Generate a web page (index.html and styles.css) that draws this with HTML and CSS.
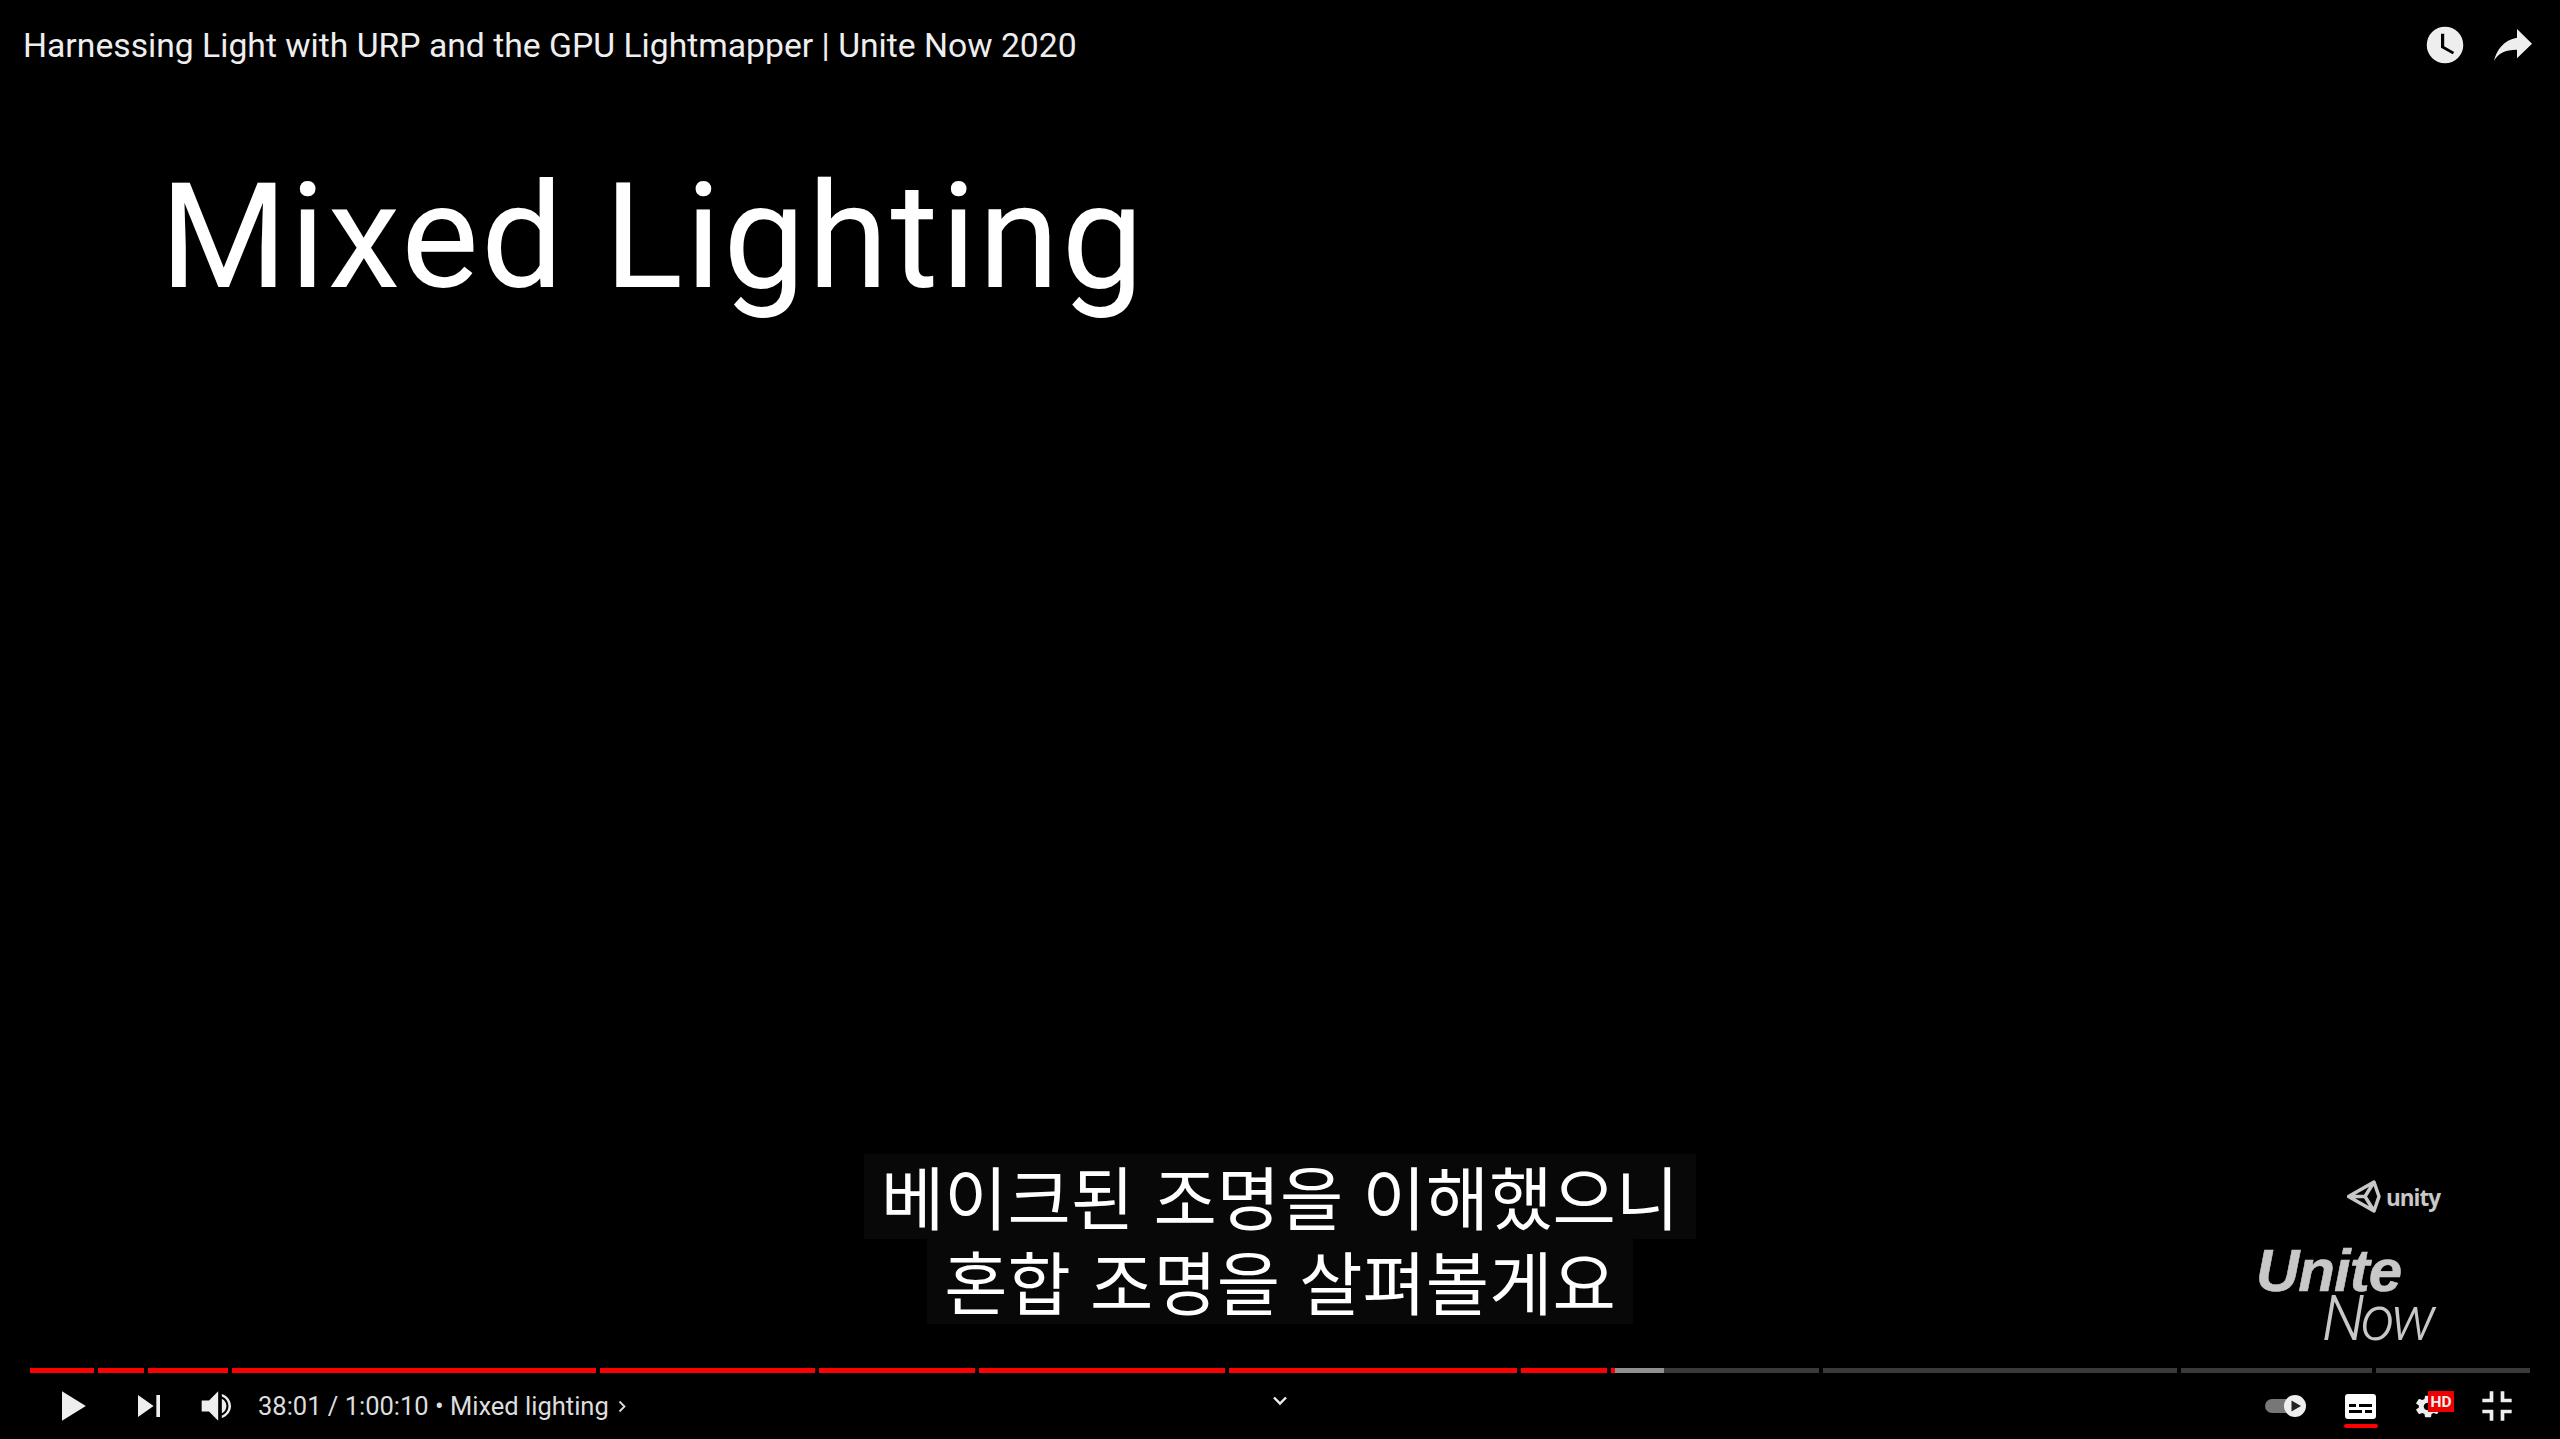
FILE: index.html
```html
<!DOCTYPE html>
<html lang="ko">
<head>
    <meta charset="UTF-8">
    <meta name="viewport" content="width=device-width, initial-scale=1.0">
    <title>Harnessing Light with URP and the GPU Lightmapper | Unite Now 2020</title>
    <link rel="stylesheet" href="styles.css">
</head>
<body>
    <div class="player">
        <div class="top-bar">
            <div class="video-title">Harnessing Light with URP and the GPU Lightmapper | Unite Now 2020</div>
            <div class="top-actions">
                <svg class="top-icon" viewBox="0 0 36 36"><path fill="#eee" fill-rule="evenodd" d="M18 4.300a13.700 13.700 0 1 0 0 27.400a13.700 13.700 0 0 0 0-27.400zM15 9.500h2.400v9.500l7.500 4.200-1.100 1.800-8.800-5z"/></svg>
                <svg class="top-icon" viewBox="0 0 36 36"><path fill="#eee" d="M21 6 32.250 17 21 28V21.500C12 21.500 7 24 3.750 30 5.500 22 11 14 21 12.500z"/></svg>
            </div>
        </div>

        <div class="stage">
            <h1 class="slide-title">Mixed Lighting</h1>

            <div class="captions">
                <div class="caption-line">베이크된 조명을 이해했으니</div>
                <div class="caption-line">혼합 조명을 살펴볼게요</div>
            </div>

            <div class="watermark">
                <div class="unity-mark">
                    <svg class="unity-cube" viewBox="0 0 34 34"><path fill="none" stroke="#c8c8c8" stroke-width="3.500" stroke-linejoin="round" d="M1.500 16.500 27 2 32 16.500 27 31zM1.500 16.500H18M27 2 18 16.500 27 31"/></svg>
                    <span class="unity-word">unity</span>
                </div>
                <div class="unite-word">Unite</div>
                <div class="now-word">Now</div>
            </div>
        </div>

        <div class="progress">
            <div class="chapter" style="flex-grow: 64"><i class="played" style="width: 100%"></i></div>
            <div class="chapter" style="flex-grow: 46"><i class="played" style="width: 100%"></i></div>
            <div class="chapter" style="flex-grow: 80"><i class="played" style="width: 100%"></i></div>
            <div class="chapter" style="flex-grow: 364"><i class="played" style="width: 100%"></i></div>
            <div class="chapter" style="flex-grow: 215"><i class="played" style="width: 100%"></i></div>
            <div class="chapter" style="flex-grow: 156"><i class="played" style="width: 100%"></i></div>
            <div class="chapter" style="flex-grow: 246"><i class="played" style="width: 100%"></i></div>
            <div class="chapter" style="flex-grow: 288"><i class="played" style="width: 100%"></i></div>
            <div class="chapter" style="flex-grow: 86"><i class="played" style="width: 100%"></i></div>
            <div class="chapter" style="flex-grow: 208"><i class="buffered" style="width: 25.500%"></i><i class="played" style="width: 2%"></i></div>
            <div class="chapter" style="flex-grow: 354"></div>
            <div class="chapter" style="flex-grow: 191"></div>
            <div class="chapter" style="flex-grow: 154"></div>
        </div>

        <div class="controls">
            <div class="controls-left">
                <svg class="ctl play-btn" viewBox="0 0 36 36"><path fill="#eee" d="M12 26 25 18 12 10z"/></svg>
                <svg class="ctl next-btn" viewBox="0 0 36 36"><path fill="#eee" d="M12 24 20.500 18 12 12zM22 12v12h2V12z"/></svg>
                <svg class="ctl volume-btn" viewBox="0 0 36 36"><path fill="#eee" d="M8 21h4l5 5V10l-5 5H8zM19 14v8c1.500-.7 2.500-2.200 2.500-4s-1-3.300-2.500-4zM19 11.500v1.300c2.200.8 3.600 2.800 3.600 5.200s-1.400 4.400-3.600 5.200v1.300c2.900-.9 5-3.500 5-6.500s-2.100-5.600-5-6.500z"/></svg>
                <div class="time-text">38:01 / 1:00:10 • Mixed lighting</div>
                <svg class="chapter-chev" viewBox="0 0 9 13"><path fill="none" stroke="#ddd" stroke-width="1.800" d="M1.500 1.500 6.500 6.500 1.500 11.500"/></svg>
            </div>
            <svg class="more-chev" viewBox="0 0 16 10"><path fill="none" stroke="#eee" stroke-width="2.400" d="M2 1.500l6 6 6-6"/></svg>
            <div class="controls-right">
                <div class="autoplay"><span class="auto-track"></span><span class="auto-knob"><svg viewBox="0 0 22 22"><path fill="#222" d="M7.500 5.500 17 11 7.500 16.500z"/></svg></span></div>
                <div class="cc-btn">
                    <svg class="cc-icon" viewBox="0 0 31 25"><path fill="#fff" fill-rule="evenodd" d="M3 0h25a3 3 0 0 1 3 3v19a3 3 0 0 1-3 3H3a3 3 0 0 1-3-3V3a3 3 0 0 1 3-3zM4 10v3h7v-3zM14 10v3h13v-3zM4 16v3h13v-3zM20 16v3h7v-3z"/></svg>
                    <span class="cc-line"></span>
                </div>
                <div class="settings">
                    <svg class="gear" viewBox="9.500 8 17 20" preserveAspectRatio="none"><path fill="#eee" d="m23.940 18.780c.03-.25.05-.51.05-.78 0-.27-.02-.52-.05-.78l1.680-1.320c.15-.12.19-.33.09-.51l-1.600-2.760c-.09-.17-.31-.24-.48-.17l-1.990.8c-.41-.32-.86-.58-1.350-.78l-.30-2.120c-.02-.19-.19-.33-.39-.33l-3.200 0c-.2 0-.36.14-.39.33l-.30 2.120c-.48.2-.93.47-1.350.78l-1.990-.8c-.18-.07-.39 0-.48.17l-1.600 2.760c-.10.17-.05.39.09.51l1.680 1.320c-.03.25-.05.52-.05.78 0 .26.02.52.05.78l-1.680 1.320c-.15.12-.19.33-.09.51l1.600 2.760c.09.17.31.24.48.17l1.990-.8c.41.32.86.58 1.350.78l.30 2.120c.02.19.19.33.39.33l3.200 0c.2 0 .36-.14.39-.33l.30-2.120c.48-.2.93-.47 1.350-.78l1.990.8c.18.07.39 0 .48-.17l1.600-2.760c.09-.17.05-.39-.09-.51l-1.680-1.320zm-5.940 2.010c-1.540 0-2.800-1.250-2.800-2.800 0-1.540 1.250-2.800 2.800-2.800 1.540 0 2.800 1.250 2.800 2.800 0 1.540-1.250 2.800-2.800 2.800z"/></svg>
                    <span class="hd-badge">HD</span>
                </div>
                <svg class="ctl exit-full" viewBox="0 0 36 36"><path fill="#eee" d="M14 14h-4v2h6v-6h-2zM22 14v-4h-2v6h6v-2zM20 26h2v-4h4v-2h-6zM14 26h2v-6h-6v2h4z"/></svg>
            </div>
        </div>
    </div>
</body>
</html>
```

FILE: styles.css
```css
* {
    box-sizing: border-box;
}
body {
    margin: 0;
    background: #000;
    font-family: Roboto, Arial, sans-serif;
    color: #eee;
}
.player {
    display: flex;
    flex-direction: column;
    height: 100vh;
    background: #000;
}
.top-bar {
    display: flex;
    align-items: center;
    justify-content: space-between;
    height: 90px;
    padding: 0 23px 0 23px;
}
.video-title {
    font-size: 33.700px;
    color: #eee;
}
.top-actions {
    display: flex;
    gap: 20px;
}
.top-icon {
    width: 48px;
    height: 48px;
}
.stage {
    position: relative;
    flex: 1;
}
.slide-title {
    margin: 63px 0 0 160px;
    font-size: 146px;
    font-weight: 400;
    letter-spacing: 2.400px;
    line-height: 170px;
    color: #fff;
}
.captions {
    position: absolute;
    left: 0;
    right: 0;
    bottom: 44px;
    display: flex;
    flex-direction: column;
    align-items: center;
    font-family: "Noto Sans CJK KR", sans-serif;
    font-size: 68.800px;
    color: #fff;
}
.caption-line {
    padding: 0 17px 3px;
    background: #080808;
    line-height: 82px;
}
.watermark {
    position: absolute;
    left: 2256px;
    top: 1090px;
    width: 190px;
    color: #c8c8c8;
}
.unity-mark {
    position: absolute;
    left: 91px;
    top: 0;
    display: flex;
    align-items: center;
    gap: 5px;
}
.unity-cube {
    width: 34px;
    height: 34px;
}
.unity-word {
    font-family: "Open Sans", sans-serif;
    font-size: 22.500px;
    font-weight: 700;
    letter-spacing: -1px;
}
.unite-word {
    position: absolute;
    left: 0;
    top: 67px;
    font-family: "Liberation Sans", sans-serif;
    font-size: 60px;
    font-weight: 700;
    font-style: italic;
    line-height: 48px;
    letter-spacing: -1px;
    -webkit-text-stroke: 0.600px #c8c8c8;
}
.now-word {
    position: absolute;
    left: 66px;
    top: 115px;
    font-size: 62px;
    font-weight: 300;
    font-style: italic;
    line-height: 48px;
    letter-spacing: -4px;
}
.progress {
    display: flex;
    gap: 4px;
    height: 5px;
    margin: 0 30px;
}
.chapter {
    position: relative;
    flex-basis: 0;
    background: #3a3a3a;
}
.chapter i {
    position: absolute;
    left: 0;
    top: 0;
    height: 100%;
}
.played {
    background: #f00;
}
.buffered {
    background: #909090;
}
.controls {
    position: relative;
    display: flex;
    align-items: center;
    justify-content: space-between;
    height: 66px;
    padding: 0 30px 0 40px;
}
.controls-left,
.controls-right {
    display: flex;
    align-items: center;
}
.ctl {
    width: 66px;
    height: 66px;
}
.next-btn {
    margin-left: 10px;
}
.volume-btn {
    margin-left: 5px;
}
.time-text {
    margin-left: 5px;
    font-size: 25.500px;
    color: #ddd;
    white-space: nowrap;
}
.chapter-chev {
    width: 9px;
    height: 13px;
    margin-left: 9px;
}
.more-chev {
    position: absolute;
    left: 1272px;
    top: 23px;
    width: 16px;
    height: 10px;
}
.autoplay {
    position: relative;
    width: 41px;
    height: 22px;
}
.auto-track {
    position: absolute;
    left: 0;
    top: 4px;
    width: 30px;
    height: 14px;
    border-radius: 7px;
    background: #777;
}
.auto-knob {
    position: absolute;
    right: 0;
    top: 0;
    width: 22px;
    height: 22px;
    border-radius: 50%;
    background: #eee;
}
.auto-knob svg {
    display: block;
}
.cc-btn {
    position: relative;
    width: 31px;
    height: 25px;
    margin-left: 39px;
}
.cc-icon {
    display: block;
    width: 31px;
    height: 25px;
}
.cc-line {
    position: absolute;
    left: -1px;
    top: 30px;
    width: 34px;
    height: 4px;
    border-radius: 2px;
    background: #f00;
}
.settings {
    position: relative;
    width: 26px;
    height: 27px;
    margin-left: 39px;
}
.gear {
    display: block;
    width: 26px;
    height: 27px;
}
.hd-badge {
    position: absolute;
    left: 13px;
    top: -2px;
    width: 26px;
    height: 21px;
    background: #e00;
    color: #eee;
    font-size: 15.500px;
    font-weight: 700;
    line-height: 23px;
    text-align: center;
}
.exit-full {
    margin-left: 23px;
}
```
